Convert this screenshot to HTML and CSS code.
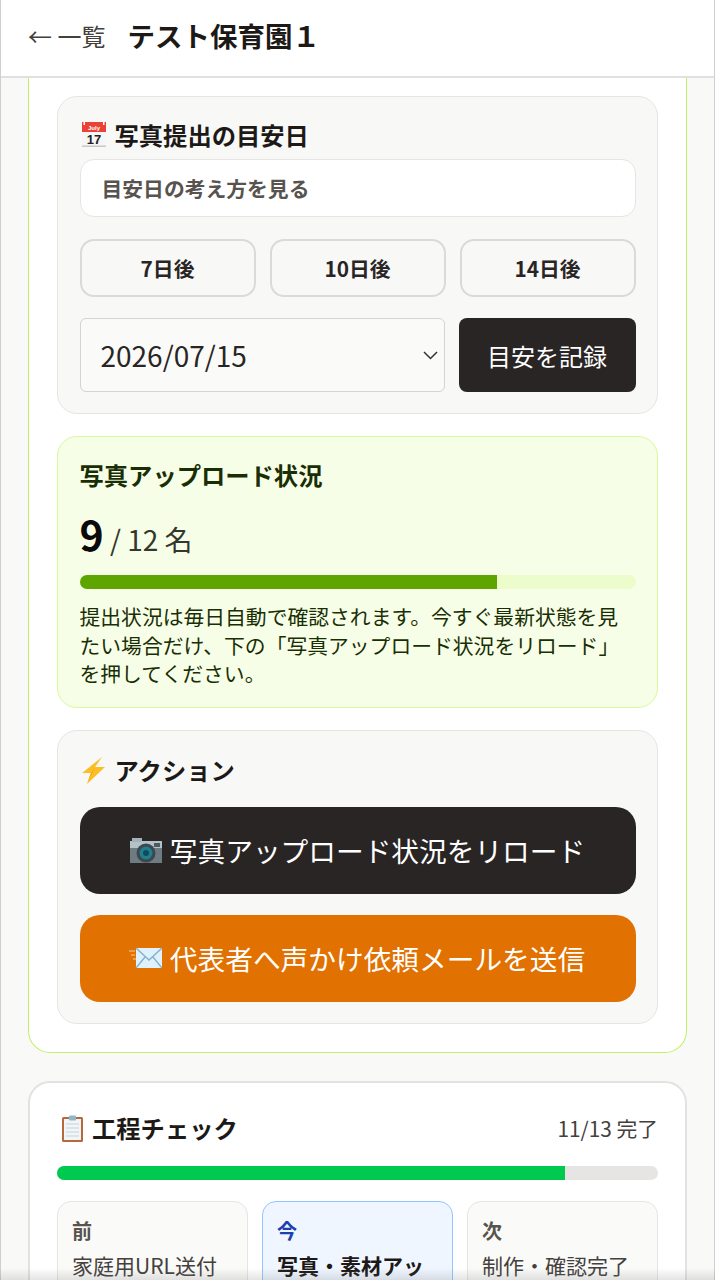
FILE: index.html
```html
<!DOCTYPE html>
<html lang="ja">

<head>
    <meta charset="UTF-8">
    <meta name="viewport" content="width=device-width, initial-scale=1.0">
    <title>テスト保育園1</title>
    <link rel="stylesheet" href="styles.css">
</head>

<body>
    <header class="topbar">
        <a class="back-link">← 一覧</a>
        <h1 class="topbar-title">テスト保育園１</h1>
    </header>

    <main class="page">
        <section class="photo-card">
            <!-- Target date -->
            <div class="panel">
                <h2 class="panel-title date-title">
                    <svg class="emoji" viewBox="0 0 28 28">
                        <rect x="2" y="1" width="24" height="25" fill="#f6f6f6" />
                        <rect x="2" y="24.5" width="24" height="1.5" fill="#c9c9c9" />
                        <rect x="2" y="1" width="24" height="10" fill="#ea4335" />
                        <rect x="3.5" y="1" width="1.5" height="3" fill="#fff" />
                        <rect x="23" y="1" width="1.5" height="3" fill="#fff" />
                        <text x="14" y="8.5" class="emoji-month">July</text>
                        <text x="14" y="23" class="emoji-day">17</text>
                    </svg>
                    写真提出の目安日
                </h2>
                <div class="hint-toggle">目安日の考え方を見る</div>
                <div class="quick-days">
                    <button class="quick-day">7日後</button>
                    <button class="quick-day">10日後</button>
                    <button class="quick-day">14日後</button>
                </div>
                <div class="date-row">
                    <div class="date-input">
                        2026/07/15
                        <svg class="chevron" viewBox="0 0 15 9">
                            <path d="M1 1 L7.5 7.5 L14 1" fill="none" stroke="#333" stroke-width="1.5" />
                        </svg>
                    </div>
                    <button class="record-btn">目安を記録</button>
                </div>
            </div>

            <!-- Upload status -->
            <div class="panel panel-green">
                <h2 class="status-title">写真アップロード状況</h2>
                <p class="status-count"><strong>9</strong> / 12 名</p>
                <div class="bar bar-lime"><div class="bar-fill bar-fill-lime" style="width: 75%"></div></div>
                <p class="status-note">提出状況は毎日自動で確認されます。今すぐ最新状態を見たい場合だけ、下の「写真アップロード状況をリロード」を押してください。</p>
            </div>

            <!-- Actions -->
            <div class="panel">
                <h2 class="panel-title action-title">
                    <svg class="emoji" viewBox="0 0 28 28">
                        <path d="M22 1 L2 17 L11 17 L7 28 L25 11 L15 11 Z" fill="#fbbf24" />
                        <path d="M22 1 L11 17 L7 28 L15 11 Z" fill="#f59e0b" />
                    </svg>
                    アクション
                </h2>
                <button class="action-btn action-dark">
                    <svg class="emoji-lg" viewBox="0 0 34 28">
                        <rect x="2" y="5" width="32" height="22" fill="#6f7b82" />
                        <rect x="2" y="5" width="32" height="7" fill="#b3c1c9" />
                        <rect x="4" y="2" width="10" height="4" fill="#a3b1b9" />
                        <rect x="26" y="7" width="6" height="4" fill="#4e5a60" />
                        <circle cx="18" cy="17" r="9.5" fill="#3d474c" />
                        <circle cx="18" cy="17" r="6.5" fill="#1f7f8f" />
                        <circle cx="18" cy="17" r="3" fill="#0f4c5a" />
                    </svg>
                    写真アップロード状況をリロード
                </button>
                <button class="action-btn action-orange">
                    <svg class="emoji-lg" viewBox="0 0 34 28">
                        <path d="M1 7 H7 M3 11 H7 M5 15 H8" stroke="#f3cda0" stroke-width="1" />
                        <rect x="8" y="4" width="26" height="20" fill="#e1f1fb" />
                        <path d="M8 4 L21 16 L34 4 M8 24 L17 13 M34 24 L25 13" fill="none" stroke="#7fb2d3" stroke-width="1.4" />
                    </svg>
                    代表者へ声かけ依頼メールを送信
                </button>
            </div>
        </section>

        <section class="steps-card">
            <div class="steps-head">
                <h2 class="panel-title steps-title">
                    <svg class="emoji" viewBox="0 0 28 28">
                        <rect x="5" y="3" width="21" height="25" rx="1.5" fill="#b5693c" />
                        <rect x="7" y="5" width="17" height="21" fill="#f1f5f8" />
                        <path d="M9 10 H22 M9 14 H22 M9 18 H22 M9 22 H22" stroke="#c9d3da" stroke-width="1" />
                        <rect x="12" y="1.5" width="7" height="5" rx="1" fill="#8fb7c9" />
                    </svg>
                    工程チェック
                </h2>
                <span class="steps-count">11/13 完了</span>
            </div>
            <div class="bar bar-gray"><div class="bar-fill bar-fill-green" style="width: 84.6%"></div></div>
            <div class="step-grid">
                <div class="step-box">
                    <div class="step-label">前</div>
                    <div class="step-name">家庭用URL送付</div>
                </div>
                <div class="step-box step-now">
                    <div class="step-label">今</div>
                    <div class="step-name">写真・素材アップロード</div>
                </div>
                <div class="step-box">
                    <div class="step-label">次</div>
                    <div class="step-name">制作・確認完了</div>
                </div>
            </div>
        </section>
    </main>

    <div class="bottom-fade"></div>
</body>

</html>
```
FILE: styles.css
```css
html,
body {
    margin: 0;
    height: 1280px;
    overflow: hidden;
}

body {
    font-family: "Noto Sans CJK JP", "Noto Sans", sans-serif;
    color: #1c1917;
    background-color: #f9f9f8;
    border-left: 1px solid #cfcfcf;
    border-right: 1px solid #cfcfcf;
    box-sizing: border-box;
}

h1,
h2,
p {
    margin: 0;
}

button {
    font-family: inherit;
    cursor: pointer;
}

/* Header */
.topbar {
    display: flex;
    align-items: center;
    gap: 22px;
    height: 70px;
    padding: 0 0 6px 27px;
    background-color: #fff;
    border-bottom: 2px solid #e0e0e0;
}

.back-link {
    font-size: 24px;
    color: #44403c;
}

.topbar-title {
    font-size: 27.5px;
    font-weight: 700;
}

/* Cards */
.page {
    padding: 0 27px;
}

.photo-card {
    display: flex;
    flex-direction: column;
    gap: 22px;
    padding: 18px 28px 28px;
    background-color: #fff;
    border: 1.5px solid #bef264;
    border-top: none;
    border-radius: 0 0 22px 22px;
}

.panel {
    padding: 22px 21.5px 21px;
    background-color: #f8f8f7;
    border: 1px solid #e7e5e4;
    border-radius: 20px;
}

.panel-green {
    padding-bottom: 19px;
    background-color: #f7fee7;
    border-color: #d8f999;
}

.panel-title {
    display: flex;
    align-items: center;
    gap: 7px;
    margin-bottom: 6px;
    font-size: 24.3px;
    line-height: 34px;
    font-weight: 700;
}

.date-title {
    margin-bottom: 8px;
    line-height: 32px;
}

.emoji {
    width: 28px;
    height: 28px;
    flex-shrink: 0;
}

.emoji-month {
    font-family: "Liberation Sans", sans-serif;
    font-size: 6px;
    font-weight: 700;
    fill: #fff;
    text-anchor: middle;
}

.emoji-day {
    font-family: "Liberation Sans", sans-serif;
    font-size: 13px;
    font-weight: 700;
    fill: #222;
    text-anchor: middle;
}

.emoji-lg {
    width: 34px;
    height: 28px;
    flex-shrink: 0;
}

/* Target date */
.hint-toggle {
    height: 56px;
    padding-left: 21px;
    font-size: 20.8px;
    font-weight: 700;
    line-height: 56px;
    color: #57534e;
    background-color: #fff;
    border: 1px solid #e7e5e4;
    border-radius: 14px;
}

.quick-days {
    display: grid;
    grid-template-columns: repeat(3, 1fr);
    gap: 14px;
    margin-top: 22px;
}

.quick-day {
    height: 58px;
    font-size: 20.8px;
    font-weight: 700;
    color: #292524;
    background-color: #f8f8f7;
    border: 2px solid #dcdad8;
    border-radius: 14px;
}

.date-row {
    display: flex;
    gap: 14px;
    margin-top: 21px;
}

.date-input {
    display: flex;
    align-items: center;
    justify-content: space-between;
    flex: 1;
    height: 74px;
    padding: 0 6px 0 20px;
    font-size: 28px;
    color: #292524;
    background-color: #fafaf9;
    border: 1px solid #d6d3d1;
    border-radius: 6px;
    box-sizing: border-box;
}

.chevron {
    width: 15px;
    height: 9px;
}

.record-btn {
    width: 177px;
    height: 74px;
    font-size: 24px;
    color: #fff;
    background-color: #292524;
    border: none;
    border-radius: 8px;
}

/* Upload status */
.status-title {
    font-size: 24.3px;
    line-height: 32px;
    font-weight: 700;
    color: #1a2e05;
}

.status-count {
    margin-top: 18px;
    font-size: 28px;
    line-height: 60px;
    color: #33372e;
}

.status-count strong {
    font-size: 41px;
    line-height: 1;
    color: #0a0a0a;
}

.bar {
    height: 14px;
    border-radius: 7px;
    overflow: hidden;
}

.bar-fill {
    height: 100%;
}

.bar-lime {
    margin-top: 6px;
    background-color: #ecfccb;
}

.bar-fill-lime {
    background-color: #5ea500;
}

.bar-gray {
    background-color: #e7e5e4;
}

.bar-fill-green {
    background-color: #00c950;
}

.status-note {
    margin-top: 13px;
    font-size: 20.8px;
    line-height: 28.5px;
    color: #1a2e05;
}

/* Actions */
.action-title {
    margin-bottom: 20px;
}

.action-btn {
    display: flex;
    align-items: center;
    justify-content: center;
    gap: 8px;
    width: 100%;
    height: 87px;
    padding: 0 2px 0 0;
    font-size: 27.7px;
    color: #fff;
    border: none;
    border-radius: 20px;
}

.action-dark {
    background-color: #292524;
}

.action-orange {
    margin-top: 21px;
    background-color: #e17100;
}

/* Steps */
.steps-card {
    margin-top: 28px;
    padding: 28px 27px;
    background-color: #fff;
    border: 2px solid #e2e2e0;
    border-radius: 22px;
}

.steps-head {
    display: flex;
    align-items: center;
    justify-content: space-between;
    margin-bottom: 21px;
}

.steps-title {
    margin-bottom: 0;
}

.steps-count {
    font-size: 20.8px;
    color: #44403c;
}

.step-grid {
    display: grid;
    grid-template-columns: repeat(3, 1fr);
    gap: 14px;
    margin-top: 21px;
}

.step-box {
    padding: 14px;
    background-color: #fafaf9;
    border: 1px solid #e7e5e4;
    border-radius: 14px;
    overflow: hidden;
}

.step-now {
    background-color: #eff6ff;
    border-color: #93c5fd;
}

.step-label {
    font-size: 20px;
    line-height: 30px;
    font-weight: 700;
    color: #57534e;
}

.step-now .step-label {
    color: #1e40af;
}

.step-name {
    margin-top: 4px;
    font-size: 21px;
    line-height: 30px;
    color: #44403c;
}

.step-now .step-name {
    font-weight: 700;
    color: #1c1917;
}

.bottom-fade {
    position: fixed;
    left: 0;
    right: 0;
    bottom: 0;
    height: 12px;
    background: linear-gradient(rgba(120, 120, 120, 0), rgba(120, 120, 120, 0.2));
}
```
